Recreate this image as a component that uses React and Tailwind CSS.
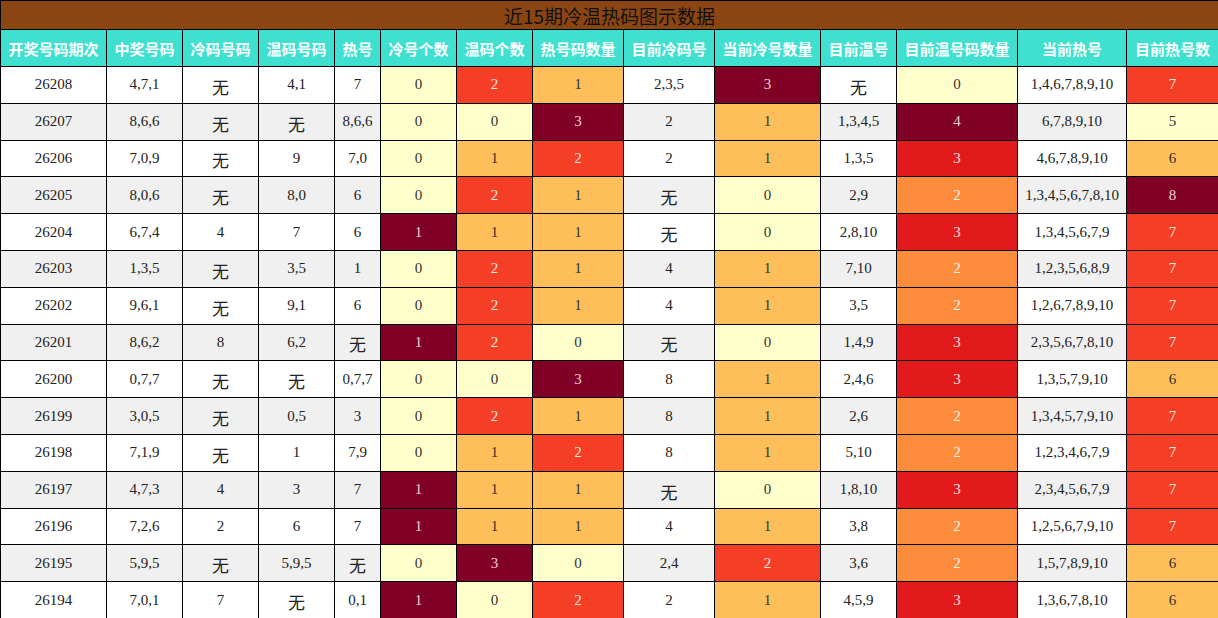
import React from "react";

const widths = [106, 76, 76, 76, 46, 76, 76, 91, 91, 106, 76, 121, 109, 92];
const headers = ["开奖号码期次", "中奖号码", "冷码号码", "温码号码", "热号", "冷号个数", "温码个数", "热号码数量", "目前冷码号", "当前冷号数量", "目前温号", "目前温号码数量", "当前热号", "目前热号数"];

const rows = [
  ["26208", "4,7,1", "无", "4,1", "7", "0", "2", "1", "2,3,5", "3", "无", "0", "1,4,6,7,8,9,10", "7"],
  ["26207", "8,6,6", "无", "无", "8,6,6", "0", "0", "3", "2", "1", "1,3,4,5", "4", "6,7,8,9,10", "5"],
  ["26206", "7,0,9", "无", "9", "7,0", "0", "1", "2", "2", "1", "1,3,5", "3", "4,6,7,8,9,10", "6"],
  ["26205", "8,0,6", "无", "8,0", "6", "0", "2", "1", "无", "0", "2,9", "2", "1,3,4,5,6,7,8,10", "8"],
  ["26204", "6,7,4", "4", "7", "6", "1", "1", "1", "无", "0", "2,8,10", "3", "1,3,4,5,6,7,9", "7"],
  ["26203", "1,3,5", "无", "3,5", "1", "0", "2", "1", "4", "1", "7,10", "2", "1,2,3,5,6,8,9", "7"],
  ["26202", "9,6,1", "无", "9,1", "6", "0", "2", "1", "4", "1", "3,5", "2", "1,2,6,7,8,9,10", "7"],
  ["26201", "8,6,2", "8", "6,2", "无", "1", "2", "0", "无", "0", "1,4,9", "3", "2,3,5,6,7,8,10", "7"],
  ["26200", "0,7,7", "无", "无", "0,7,7", "0", "0", "3", "8", "1", "2,4,6", "3", "1,3,5,7,9,10", "6"],
  ["26199", "3,0,5", "无", "0,5", "3", "0", "2", "1", "8", "1", "2,6", "2", "1,3,4,5,7,9,10", "7"],
  ["26198", "7,1,9", "无", "1", "7,9", "0", "1", "2", "8", "1", "5,10", "2", "1,2,3,4,6,7,9", "7"],
  ["26197", "4,7,3", "4", "3", "7", "1", "1", "1", "无", "0", "1,8,10", "3", "2,3,4,5,6,7,9", "7"],
  ["26196", "7,2,6", "2", "6", "7", "1", "1", "1", "4", "1", "3,8", "2", "1,2,5,6,7,9,10", "7"],
  ["26195", "5,9,5", "无", "5,9,5", "无", "0", "3", "0", "2,4", "2", "3,6", "2", "1,5,7,8,9,10", "6"],
  ["26194", "7,0,1", "7", "无", "0,1", "1", "0", "2", "2", "1", "4,5,9", "3", "1,3,6,7,8,10", "6"],
];

const Y = "bg-[#ffffcc] text-[#333333]";
const LO = "bg-[#febf5b] text-[#333333]";
const RO = "bg-[#f43f26] text-[#fde8e0]";
const O = "bg-[#fd8d3c] text-[#fff0e0]";
const R = "bg-[#e31a1c] text-[#fde0e0]";
const M = "bg-[#800026] text-[#f0d0d8]";

const heat = {
  5: { "0": Y, "1": M },
  6: { "0": Y, "1": LO, "2": RO, "3": M },
  7: { "0": Y, "1": LO, "2": RO, "3": M },
  9: { "0": Y, "1": LO, "2": RO, "3": M },
  11: { "0": Y, "2": O, "3": R, "4": M },
  13: { "5": Y, "6": LO, "7": RO, "8": M },
};

export default function App() {
  return (
    <div className="w-[1218px] h-[618px] overflow-hidden bg-white">
      <table className="table-fixed border-collapse w-[1218px]">
        <colgroup>
          {widths.map((w, i) => (
            <col key={i} style={{ width: w }} />
          ))}
        </colgroup>
        <thead>
          <tr className="h-[29px]">
            <th
              colSpan={14}
              className="border border-black bg-[#8b4513] text-[#111111] text-[19px] font-normal leading-none p-0 text-center"
              style={{ fontFamily: '"Noto Sans CJK SC", sans-serif' }}
            >
              近15期冷温热码图示数据
            </th>
          </tr>
          <tr className="h-[37px]">
            {headers.map((h, i) => (
              <th
                key={i}
                className="border border-black bg-[#40e0d0] text-white text-[15px] font-bold p-0 text-center whitespace-nowrap leading-none"
                style={{ fontFamily: '"Noto Sans CJK SC", sans-serif' }}
              >
                {h}
              </th>
            ))}
          </tr>
        </thead>
        <tbody>
          {rows.map((r, ri) => {
            const base = ri % 2 === 1 ? "bg-[#f0f0f0] text-[#222222]" : "bg-white text-[#222222]";
            return (
              <tr key={ri} className="h-[36.8px]">
                {r.map((c, ci) => {
                  const cls = heat[ci] ? heat[ci][c] : base;
                  const isWu = c === "无";
                  return (
                    <td
                      key={ci}
                      className={`border border-black p-0 text-center whitespace-nowrap leading-none ${cls} ${isWu ? "text-[17px] pt-[3px]" : "text-[15px]"}`}
                      style={{
                        fontFamily: isWu
                          ? '"Noto Sans CJK SC", sans-serif'
                          : '"Liberation Serif", serif',
                      }}
                    >
                      {c}
                    </td>
                  );
                })}
              </tr>
            );
          })}
        </tbody>
      </table>
    </div>
  );
}
